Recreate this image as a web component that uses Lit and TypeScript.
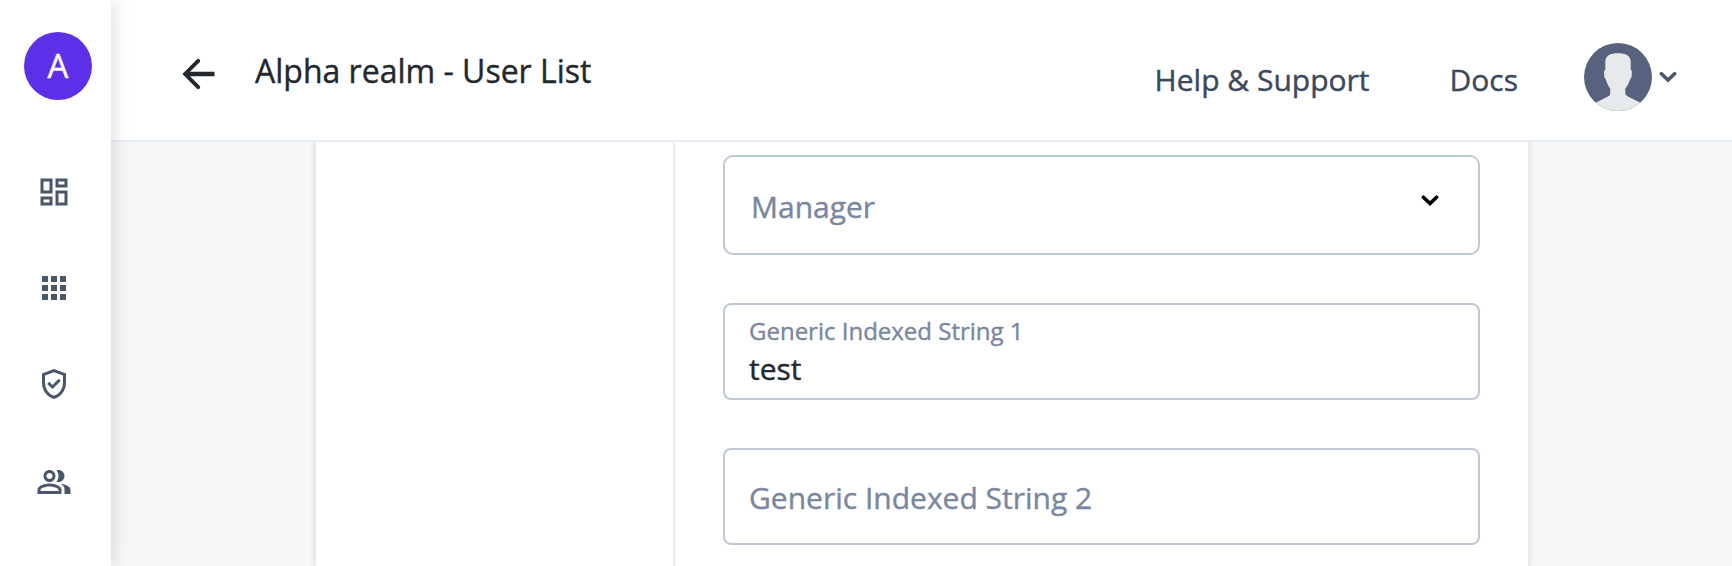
import { LitElement, html, css, svg } from "lit";
import { customElement } from "lit/decorators.js";

const navIcons = [
  svg`<path d="M19 5v2h-4V5h4M9 5v6H5V5h4m10 8v6h-4v-6h4M9 17v2H5v-2h4M21 3h-8v6h8V3zM11 3H3v10h8V3zm10 8h-8v10h8V11zm-10 4H3v6h8v-6z"/>`,
  svg`<path d="M4 8h4V4H4v4zm6 12h4v-4h-4v4zm-6 0h4v-4H4v4zm0-6h4v-4H4v4zm6 0h4v-4h-4v4zm6-10v4h4V4h-4zm-6 4h4V4h-4v4zm6 6h4v-4h-4v4zm0 6h4v-4h-4v4z"/>`,
  svg`<path d="M12 22q-3.475-.875-5.738-3.988T4 11.1V5l8-3 8 3v6.1q0 3.8-2.262 6.913T12 22zm0-2.1q2.6-.825 4.3-3.3t1.7-5.5V6.375l-6-2.25-6 2.25V11.1q0 3.025 1.7 5.5t4.3 3.3z"/><path d="M10.95 15.4l5.55-5.45-1.4-1.4-4.15 4.1-2.1-2.1-1.4 1.4z"/>`,
  svg`<path d="M16.67 13.13C18.04 14.06 19 15.32 19 17v3h4v-3c0-2.18-3.57-3.47-6.33-3.87zM15 12c2.21 0 4-1.79 4-4s-1.79-4-4-4c-.47 0-.91.1-1.33.24a5.98 5.98 0 0 1 0 7.52c.42.14.86.24 1.33.24zM9 12c2.21 0 4-1.79 4-4s-1.79-4-4-4-4 1.79-4 4 1.79 4 4 4zm0-6c1.1 0 2 .9 2 2s-.9 2-2 2-2-.9-2-2 .9-2 2-2zM9 13c-2.67 0-8 1.34-8 4v3h16v-3c0-2.66-5.33-4-8-4zm6 5H3v-.99C3.2 16.29 6.3 15 9 15s5.800 1.290 6 2v1z"/>`,
];

@customElement("app-root")
export class AppRoot extends LitElement {
  static styles = css`
    :host {
      display: flex;
      height: 566px;
      overflow: hidden;
      font-family: "Open Sans", "Noto Sans", sans-serif;
      -webkit-text-stroke-width: 0.4px;
      background: #f6f8fa;
      color: #23282e;
    }
    * { box-sizing: border-box; }
    svg { display: block; flex: none; }
    .side {
      flex: none;
      width: 111px;
      background: #fff;
      box-shadow: 0 0 20px rgba(0, 0, 0, 0.17);
      z-index: 2;
      position: relative;
    }
    .logo {
      width: 68px;
      height: 68px;
      margin: 32px 0 0 24px;
      border-radius: 50%;
      background: #5e2fe8;
      color: #fff;
      font-size: 33px;
      line-height: 68px;
      text-align: center;
    }
    .menu {
      display: flex;
      flex-direction: column;
      gap: 60px;
      padding: 74px 0 0 36px;
      fill: #4a566a;
    }
    .menu svg:last-child { margin-top: 2px; }
    .main {
      flex: 1;
      display: flex;
      flex-direction: column;
      min-width: 0;
    }
    header {
      flex: none;
      display: flex;
      align-items: flex-start;
      height: 142px;
      padding-left: 63px;
      background: #fff;
      border-bottom: 2px solid #e7edf4;
      white-space: nowrap;
    }
    .back { margin-top: 50px; fill: #23282e; }
    .title {
      margin: 51px auto 0 33px;
      font-size: 32px;
      font-weight: 400;
      line-height: 40px;
    }
    .link {
      margin: 60px 0 0;
      font-size: 30px;
      line-height: 40px;
      color: #3c485c;
    }
    .docs { margin-left: 80px; }
    .avatar { margin: 43px 0 0 66px; }
    .caret { margin: 70px 55px 0 7px; }
    .body {
      flex: 1;
      display: flex;
      padding: 0 202px 0 203px;
      overflow: hidden;
    }
    .card {
      flex: 1;
      display: flex;
      background: #fff;
      border: solid #e7ebf1;
      border-width: 0 2px;
      box-shadow: 0 0 6px rgba(0, 0, 0, 0.12);
    }
    .tabs { flex: none; width: 359px; border-right: 2px solid #e7edf4; }
    .form {
      flex: 1;
      display: flex;
      flex-direction: column;
      gap: 48px;
      padding: 13px 48px 0;
    }
    .field {
      flex: none;
      height: 97px;
      border: 2px solid #c0c9d6;
      border-radius: 8px;
      padding: 0 24px;
      font-size: 30px;
      line-height: 40px;
      color: #7a879f;
    }
    .select {
      display: flex;
      justify-content: space-between;
      align-items: flex-start;
      height: 100px;
      border-radius: 10px;
      padding: 30px 39px 0 26px;
    }
    .select svg { margin-top: 7px; }
    .empty { padding-top: 28px; }
    .filled { padding-top: 8px; }
    .label { font-size: 24px; line-height: 35px; }
    .value { color: #23282e; padding-top: 1px; }
  `;

  private caret(color: string) {
    return html`<svg class="caret" width="18" height="14" viewBox="0 0 18 14">
      <path d="M2.4 3.7 9 10.1l6.600-6.400" fill="none" stroke=${color} stroke-width="3.600" stroke-linecap="round"/>
    </svg>`;
  }

  render() {
    return html`
      <nav class="side">
        <div class="logo">A</div>
        <div class="menu">
          ${navIcons.map((i) => html`<svg width="36" height="36" viewBox="0 0 24 24">${i}</svg>`)}
        </div>
      </nav>
      <div class="main">
        <header>
          <svg class="back" width="48" height="48" viewBox="0 0 24 24">
            <path d="M20.250 10.900H8l4.800-4.780c.39-.39.39-1.030 0-1.420a1 1 0 0 0-1.410 0L4.200 12l7.190 7.300a1 1 0 0 0 1.410 0c.39-.39.39-1.020 0-1.410L8 13.100h12.250z"/>
          </svg>
          <h1 class="title">Alpha realm - User List</h1>
          <span class="link">Help &amp; Support</span>
          <span class="link docs">Docs</span>
          <svg class="avatar" width="68" height="68" viewBox="0 0 68 68">
            <defs><clipPath id="round"><circle cx="34" cy="34" r="34"/></clipPath></defs>
            <g clip-path="url(#round)">
              <rect width="68" height="68" fill="#58617e"/>
              <path d="M21.300 19C21.300 12.500 26 10.200 34 10.200s12.700 2.300 12.700 8.800v8c1.300.2 1.200 2 1.100 4-.1 2.500-.3 4.500-1.600 5-.9 3.500-2.900 7-4.900 9.500V50c0 2 1.200 2.800 3.200 3.800L56 59.600 54 70H14l-2-10.400 11.500-5.800c2-1 2.700-1.800 2.700-3.800v-4.500c-2-2.500-3.600-6-4.500-9.500-1.300-.5-1.500-2.500-1.600-5-.1-2-.1-3.800 1.200-4z" fill="#e6eaeb"/>
            </g>
          </svg>
          ${this.caret("#4a566a")}
        </header>
        <div class="body">
          <main class="card">
            <div class="tabs"></div>
            <div class="form">
              <div class="field select"><span>Manager</span>${this.selectCaret()}</div>
              <div class="field filled">
                <div class="label">Generic Indexed String 1</div>
                <div class="value">test</div>
              </div>
              <div class="field empty">Generic Indexed String 2</div>
            </div>
          </main>
        </div>
      </div>
    `;
  }

  private selectCaret() {
    return html`<svg width="18" height="14" viewBox="0 0 18 14">
      <path d="M2.400 3.200 9 9.600l6.600-6.400" fill="none" stroke="#000" stroke-width="3.600" stroke-linecap="round"/>
    </svg>`;
  }
}
